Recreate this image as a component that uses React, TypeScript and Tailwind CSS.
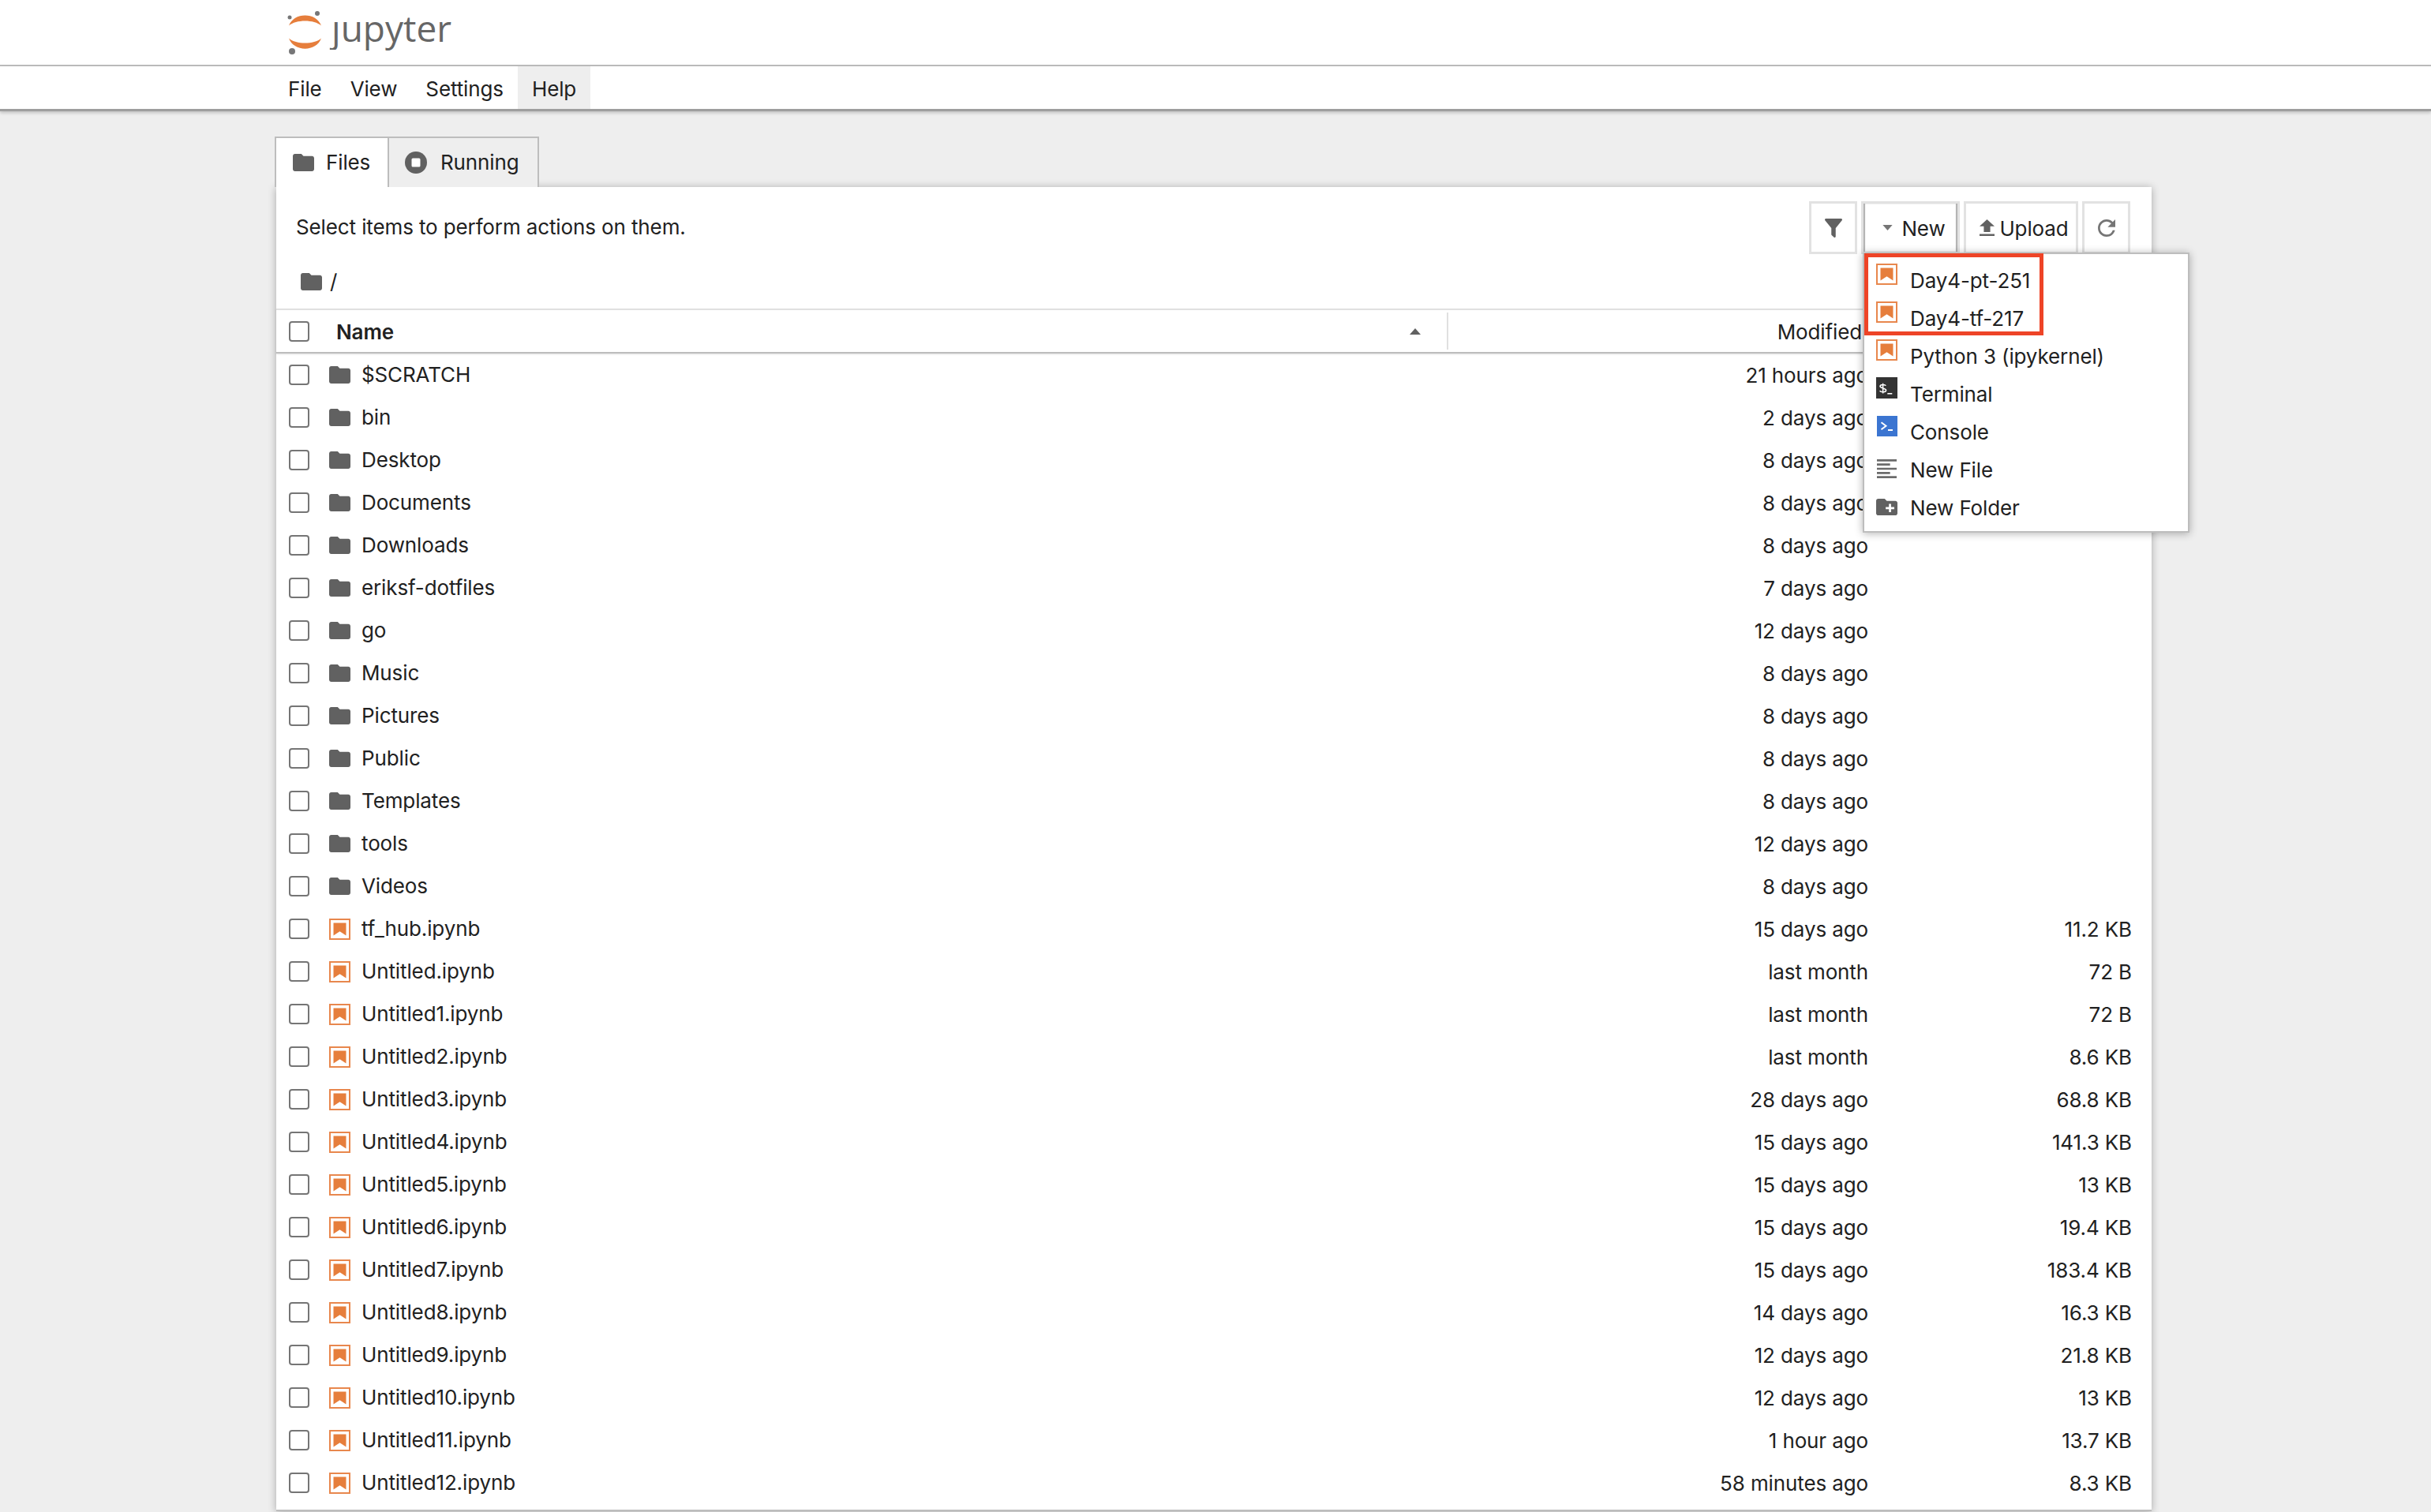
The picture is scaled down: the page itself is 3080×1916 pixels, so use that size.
import React from 'react';

const folders: [string, string][] = [
  ['$SCRATCH', '21 hours ago'],
  ['bin', '2 days ago'],
  ['Desktop', '8 days ago'],
  ['Documents', '8 days ago'],
  ['Downloads', '8 days ago'],
  ['eriksf-dotfiles', '7 days ago'],
  ['go', '12 days ago'],
  ['Music', '8 days ago'],
  ['Pictures', '8 days ago'],
  ['Public', '8 days ago'],
  ['Templates', '8 days ago'],
  ['tools', '12 days ago'],
  ['Videos', '8 days ago'],
];

const notebooks: [string, string, string][] = [
  ['tf_hub.ipynb', '15 days ago', '11.2 KB'],
  ['Untitled.ipynb', 'last month', '72 B'],
  ['Untitled1.ipynb', 'last month', '72 B'],
  ['Untitled2.ipynb', 'last month', '8.6 KB'],
  ['Untitled3.ipynb', '28 days ago', '68.8 KB'],
  ['Untitled4.ipynb', '15 days ago', '141.3 KB'],
  ['Untitled5.ipynb', '15 days ago', '13 KB'],
  ['Untitled6.ipynb', '15 days ago', '19.4 KB'],
  ['Untitled7.ipynb', '15 days ago', '183.4 KB'],
  ['Untitled8.ipynb', '14 days ago', '16.3 KB'],
  ['Untitled9.ipynb', '12 days ago', '21.8 KB'],
  ['Untitled10.ipynb', '12 days ago', '13 KB'],
  ['Untitled11.ipynb', '1 hour ago', '13.7 KB'],
  ['Untitled12.ipynb', '58 minutes ago', '8.3 KB'],
];

function FolderIcon() {
  return (
    <svg viewBox="2 4 20 16" className="h-[22px] w-[27px]" fill="#616161" preserveAspectRatio="none">
      <path d="M10 4H4c-1.100 0-2 .9-2 2v12c0 1.100.9 2 2 2h16c1.100 0 2-.9 2-2V8c0-1.100-.9-2-2-2h-8l-2-2z" />
    </svg>
  );
}

function NotebookIcon() {
  return (
    <svg viewBox="0 0 27 27" className="h-[27px] w-[27px]">
      <rect x="1" y="1" width="25" height="25" fill="#fff" stroke="#e8874d" strokeWidth="2" />
      <path d="M5.500 5.500h16v16l-8-5.200-8 5.200z" fill="#e67e3c" />
    </svg>
  );
}

function Checkbox() {
  return <span className="h-[26px] w-[26px] shrink-0 rounded-[4px] border-2 border-[#757575] bg-white" />;
}

function Row({ icon, name, modified, size }: { icon: React.ReactNode; name: string; modified: string; size?: string }) {
  return (
    <div className="flex h-[54px] items-center pl-[16px] pr-[25px]">
      <Checkbox />
      <span className="ml-[25px] flex w-[27px] shrink-0 justify-center">{icon}</span>
      <span className="ml-[14px] flex-1">{name}</span>
      <span className="mt-[2px] w-[400px] text-right">{modified}</span>
      <span className="mt-[2px] w-[334px] text-right">{size}</span>
    </div>
  );
}

function ToolButton({ className, children }: { className: string; children: React.ReactNode }) {
  return (
    <div className={`flex h-[67px] items-center justify-center border-[3px] border-[#e2e2e2] bg-white ${className}`}>{children}</div>
  );
}

function MenuItem({ icon, label, raised = true }: { icon: React.ReactNode; label: string; raised?: boolean }) {
  return (
    <div className="flex h-[48px] items-center pl-[14px]">
      <span className={`flex w-[29px] justify-center ${raised ? 'mt-[-16px]' : 'mt-[-3px]'}`}>{icon}</span>
      <span className="ml-[15px]">{label}</span>
    </div>
  );
}

export default function App() {
  return (
    <div className="relative h-[1916px] overflow-hidden bg-[#eeeeee] text-[26px] leading-none tracking-[-0.12px] text-[#212121] font-['Inter',sans-serif]">
      <header className="flex h-[84px] items-start border-b-2 border-[#bdbdbd] bg-white pl-[364px]">
        <svg viewBox="0 0 46 56" className="mt-[14px] h-[56px] w-[46px]">
          <path d="M2 18.500C8 1 37 1 43 18.500C34 10.500 11 10.500 2 18.500Z" fill="#e67e3c" />
          <path d="M2 34.500C8 52 37 52 43 34.500C34 42.500 11 42.500 2 34.500Z" fill="#e67e3c" />
          <circle cx="38" cy="3" r="3" fill="#767677" />
          <circle cx="3" cy="8" r="2.500" fill="#767677" />
          <circle cx="6" cy="51" r="4" fill="#767677" />
        </svg>
        <span className="ml-[10px] mt-[7px] text-[46px] leading-[56px] tracking-normal text-[#666666] font-['Open_Sans',sans-serif]">
          <span className="inline-block [clip-path:inset(35%_0_0_-20%)]">j</span>upyter
        </span>
      </header>

      <nav className="flex h-[57px] border-b-[3px] border-[#9e9e9e] bg-white pl-[347px] shadow-[0_2px_4px_rgba(0,0,0,0.2)]">
        <span className="flex items-center px-[18px] pt-[3px]">File</span>
        <span className="flex items-center px-[18px] pt-[3px]">View</span>
        <span className="flex items-center px-[18px] pt-[3px]">Settings</span>
        <span className="flex items-center bg-[#eeeeee] px-[18px] pt-[3px]">Help</span>
      </nav>

      <main className="pl-[350px] pt-[32px]">
        <div className="flex h-[64px]">
          <div className="ml-[-2px] flex w-[145px] items-center border-x-2 border-t-2 border-[#bdbdbd] bg-white pl-[21px]">
            <FolderIcon />
            <span className="ml-[15px]">Files</span>
          </div>
          <div className="flex w-[190px] items-center border-r-2 border-t-2 border-[#bdbdbd] bg-[#eeeeee] pl-[20px]">
            <svg viewBox="0 0 28 28" className="h-[28px] w-[28px]">
              <circle cx="14" cy="14" r="14" fill="#616161" />
              <rect x="8.500" y="8.500" width="11" height="11" rx="1.500" fill="#fff" />
            </svg>
            <span className="ml-[17px]">Running</span>
          </div>
        </div>

        <div className="h-[1678px] w-[2376px] border-b-2 border-[#bdbdbd] bg-white shadow-[0_1px_10px_rgba(0,0,0,0.3)]">
          <div className="flex h-[85px] items-end pl-[25px] pr-[27px]">
            <span className="mb-[21px] flex-1">Select items to perform actions on them.</span>
            <div className="flex gap-[5px]">
              <ToolButton className="w-[61px]">
                <svg viewBox="4 3 16 18" className="h-[24px] w-[22px]" fill="#616161" preserveAspectRatio="none">
                  <path d="M14 12v7.880c.04.3-.06.62-.29.830a1 1 0 0 1-1.410 0l-2.010-2.010a1 1 0 0 1-.29-.830V12h-.03L4.210 4.620A1 1 0 0 1 5 3h14a1 1 0 0 1 .790 1.620L14.030 12H14z" />
                </svg>
              </ToolButton>
              <ToolButton className="w-[125px] gap-[11px] pl-[9px] shadow-[inset_2px_0_1px_#b0b0b0,inset_-2px_0_1px_#b0b0b0]">
                <svg viewBox="0 0 14 8" className="h-[7px] w-[13px]" fill="#757575">
                  <path d="M0 0h14L7 8z" />
                </svg>
                <span className="mt-[3px]">New</span>
              </ToolButton>
              <ToolButton className="w-[145px] gap-[6px] pl-[8px]">
                <svg viewBox="5 3 14 17" className="h-[21px] w-[19px]" fill="#616161" preserveAspectRatio="none">
                  <path d="M9 16h6v-6h4l-7-7-7 7h4zm-4 2h14v2H5z" />
                </svg>
                <span className="mt-[3px]">Upload</span>
              </ToolButton>
              <ToolButton className="w-[61px]">
                <svg viewBox="4 4 16 16" className="h-[22px] w-[22px]" fill="#757575">
                  <path d="M17.650 6.350A7.960 7.960 0 0 0 12 4c-4.420 0-7.990 3.580-7.990 8s3.570 8 7.990 8c3.730 0 6.840-2.550 7.730-6h-2.080A5.990 5.990 0 0 1 12 18c-3.310 0-6-2.690-6-6s2.690-6 6-6c1.660 0 3.140.69 4.220 1.780L13 11h7V4l-2.350 2.350z" />
                </svg>
              </ToolButton>
            </div>
          </div>

          <div className="flex h-[69px] items-center pl-[31px]">
            <FolderIcon />
            <span className="ml-[10px]">/</span>
          </div>

          <div className="flex h-[57px] items-center border-y-2 border-t-[#e0e0e0] border-b-[#bdbdbd] pl-[16px] pr-[25px] shadow-[0_1px_2px_rgba(0,0,0,0.12)]">
            <Checkbox />
            <span className="ml-[34px] mt-[2px] font-semibold">Name</span>
            <svg viewBox="0 0 14 8" className="ml-[1286px] h-[8px] w-[16px]" fill="#616161">
              <path d="M7 0l7 8H0z" />
            </svg>
            <span className="ml-[32px] h-[47px] w-[2px] bg-[#e0e0e0]" />
            <span className="mt-[2px] flex-1 pr-[342px] text-right">Modified</span>
          </div>

          {folders.map(([name, modified]) => (
            <Row key={name} icon={<FolderIcon />} name={name} modified={modified} />
          ))}
          {notebooks.map(([name, modified, size]) => (
            <Row key={name} icon={<NotebookIcon />} name={name} modified={modified} size={size} />
          ))}
        </div>
      </main>

      <div className="absolute left-[2360px] top-[320px] h-[355px] w-[414px] border-2 border-[#bdbdbd] bg-white py-[9.5px] shadow-[0_1px_10px_rgba(0,0,0,0.3)]">
        <MenuItem icon={<NotebookIcon />} label="Day4-pt-251" />
        <MenuItem icon={<NotebookIcon />} label="Day4-tf-217" />
        <MenuItem icon={<NotebookIcon />} label="Python 3 (ipykernel)" />
        <MenuItem
          icon={
            <svg viewBox="0 0 27 27" className="h-[27px] w-[27px]">
              <rect width="27" height="27" fill="#333333" />
              <path d="M12.300 10.800C11.500 9 5 8.600 5 11.600c0 3 7.600 1.800 7.600 5 0 2.900-6.600 2.700-8 .7M8.600 7.800v12.800" fill="none" stroke="#fff" strokeWidth="1.500" />
              <path d="M14.300 20h6v1.600h-6z" fill="#fff" />
            </svg>
          }
          label="Terminal"
        />
        <MenuItem
          icon={
            <svg viewBox="0 0 26 26" className="h-[26px] w-[26px]">
              <rect width="26" height="26" fill="#3b75d1" />
              <path d="M5.500 8.200l6 4.500-6 4.500" fill="none" stroke="#fff" strokeWidth="2" />
              <path d="M14 17h6v2h-6z" fill="#fff" />
            </svg>
          }
          label="Console"
        />
        <MenuItem
          raised={false}
          icon={
            <svg viewBox="3 3 18 18" className="h-[24px] w-[25px]" fill="#6b6b6b" preserveAspectRatio="none">
              <path d="M15 15H3v2h12v-2zm0-8H3v2h12V7zM3 13h18v-2H3v2zm0 8h18v-2H3v2zM3 3v2h18V3H3z" />
            </svg>
          }
          label="New File"
        />
        <MenuItem
          raised={false}
          icon={
            <svg viewBox="2 4 20 16" className="h-[21px] w-[27px]" fill="#616161" preserveAspectRatio="none">
              <path d="M20 6h-8l-2-2H4c-1.110 0-1.990.89-1.990 2L2 18c0 1.110.89 2 2 2h16c1.110 0 2-.89 2-2V8c0-1.110-.89-2-2-2zm-1 8h-3v3h-2v-3h-3v-2h3V9h2v3h3v2z" />
            </svg>
          }
          label="New Folder"
        />
      </div>

      <div className="absolute left-[2362px] top-[321px] h-[104px] w-[227px] border-[5px] border-[#ee4427]" />
    </div>
  );
}
